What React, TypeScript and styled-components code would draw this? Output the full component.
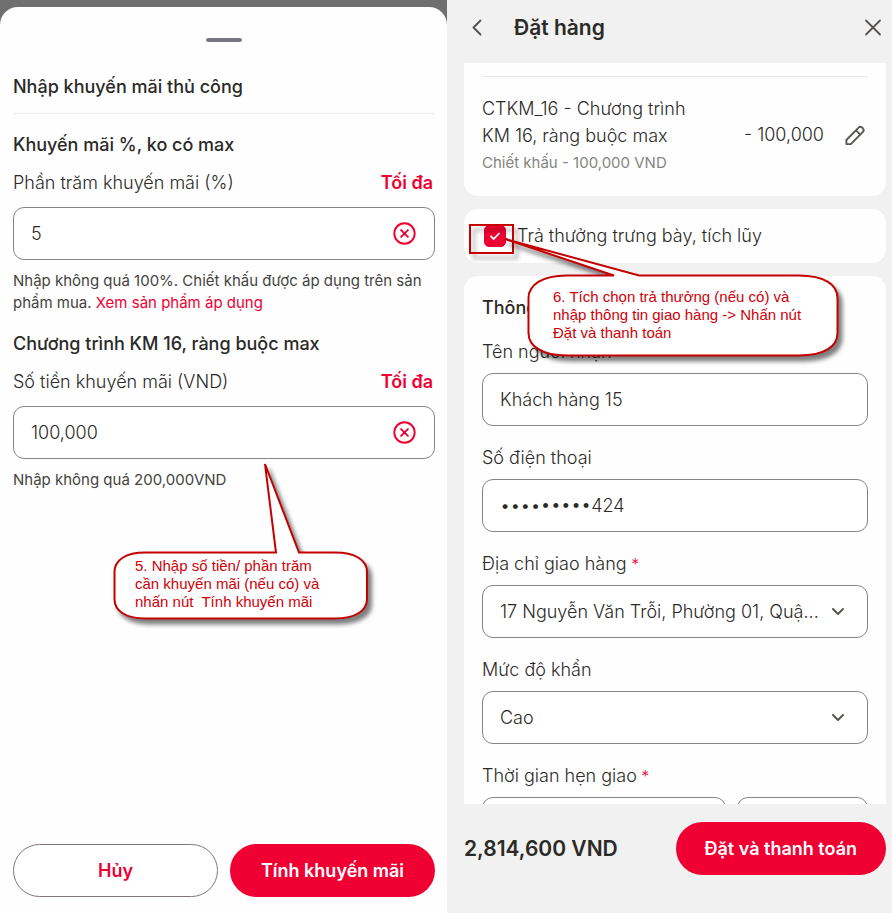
import React from 'react';
import styled, { createGlobalStyle } from 'styled-components';

const ink = '#2b2a27';
const brand = '#f00032';
const noteRed = '#c40000';

const GlobalStyle = createGlobalStyle`
  *, *::before, *::after { box-sizing: border-box; }
  body {
    margin: 0;
    background: #f1f1f1;
    color: ${ink};
    font-family: Inter, sans-serif;
    font-size: 18px;
    line-height: 24px;
  }
  button, input, select { font: inherit; color: inherit; }
  h1, h2, h3, p { margin: 0; }
`;

const Page = styled.div`
  display: grid;
  grid-template-columns: 447fr 445fr;
  height: 100vh;
`;

const Backdrop = styled.section`
  position: relative;
  display: flex;
  flex-direction: column;
  padding-top: 7px;
  background: #6f6f6f;
  min-width: 0;
`;

const Sheet = styled.div`
  flex: 1;
  display: flex;
  flex-direction: column;
  padding: 31px 12px 16px 13px;
  background: #fefefe;
  border-radius: 18px 18px 0 0;
`;

const Handle = styled.div`
  align-self: center;
  width: 36px;
  height: 4px;
  border-radius: 2px;
  background: #787580;
`;

const SheetTitle = styled.h1`
  margin-top: 33px;
  padding-bottom: 14px;
  border-bottom: 1px solid #ececec;
  font-size: 18px;
  font-weight: 500;
  line-height: 24px;
`;

const SheetBody = styled.div`
  flex: 1;
  display: flex;
  flex-direction: column;
  gap: 18px;
  padding-top: 19px;
`;

const Promo = styled.div`
  display: flex;
  flex-direction: column;
`;

const Heading = styled.h2`
  font-size: 18px;
  font-weight: 500;
  line-height: 24px;
`;

const LabelRow = styled.div`
  display: flex;
  justify-content: space-between;
  margin: 14px 0 12px;
  padding-right: 2px;
`;

const Label = styled.label`
  font-weight: 300;
`;

const TextButton = styled.button`
  padding: 0;
  border: 0;
  background: none;
  color: ${brand};
  font-weight: 600;
`;

const Box = styled.div<{ $menu?: boolean }>`
  display: flex;
  align-items: center;
  width: 100%;
  min-width: 0;
  height: 53px;
  padding: 0 ${p => (p.$menu ? 22 : 17)}px 0 17px;
  border: 1px solid #858585;
  border-radius: 11px;
  background: #fff;
`;

const BoxInput = styled.input`
  flex: 1;
  min-width: 0;
  padding: 0;
  border: 0;
  outline: 0;
  background: none;
  font-weight: 300;
`;

const BoxSelect = styled.select`
  flex: 1;
  min-width: 0;
  padding: 0;
  border: 0;
  outline: 0;
  appearance: none;
  background: none;
  font-weight: 300;
`;

const IconButton = styled.button`
  display: grid;
  place-items: center;
  padding: 0;
  border: 0;
  background: none;
`;

const Hint = styled.p`
  margin-top: 10px;
  font-size: 15px;
  font-weight: 400;
  line-height: 22px;
  color: #45443f;
`;

const HintLink = styled.a`
  color: ${brand};
  text-decoration: none;
`;

const SheetActions = styled.div`
  display: grid;
  grid-template-columns: 1fr 1fr;
  gap: 12px;
`;

const Pill = styled.button<{ $filled?: boolean }>`
  height: 53px;
  padding: 0 29px;
  border: ${p => (p.$filled ? '0' : '1px solid #857474')};
  border-radius: 27px;
  background: ${p => (p.$filled ? brand : '#fff')};
  color: ${p => (p.$filled ? '#fff' : brand)};
  font-weight: 600;
  white-space: nowrap;
`;

const Order = styled.section`
  position: relative;
  display: flex;
  flex-direction: column;
  min-width: 0;
  height: 100vh;
  background: #f1f1f1;
`;

const TopBar = styled.header`
  display: flex;
  align-items: center;
  height: 63px;
  padding: 0 10px 8px 20px;
  color: #55534f;
`;

const TopTitle = styled.h1`
  flex: 1;
  margin-left: 27px;
  color: ${ink};
  font-size: 21px;
  font-weight: 600;
  line-height: 28px;
`;

const Scroll = styled.div`
  flex: 1;
  min-height: 0;
  display: flex;
  flex-direction: column;
  gap: 13px;
  overflow: hidden;
  padding: 0 6px 0 17px;
`;

const Card = styled.div<{ $cutTop?: boolean }>`
  flex: none;
  padding: ${p => (p.$cutTop ? '13px' : '0')} 18px 0;
  border-radius: ${p => (p.$cutTop ? '0 0 14px 14px' : '14px')};
  background: #fefefe;
`;

const DiscountRow = styled.div`
  display: flex;
  align-items: center;
  padding: 18px 2px 22px 0;
  border-top: 1px solid #e8e8e8;
`;

const DiscountText = styled.div`
  flex: 1;
  min-width: 0;
`;

const DiscountName = styled.p`
  max-width: 220px;
  font-weight: 300;
  line-height: 27px;
`;

const DiscountNote = styled.p`
  margin-top: 3px;
  color: #85857f;
  font-size: 15px;
  line-height: 22px;
`;

const Amount = styled.span`
  margin-right: 20px;
  font-weight: 300;
`;

const RewardRow = styled.div`
  display: flex;
  align-items: center;
  gap: 11px;
  height: 54px;
`;

const CheckWrap = styled.span`
  display: grid;
  margin-left: 2px;
  color: #fff;

  > * { grid-area: 1 / 1; place-self: center; }
  > svg { pointer-events: none; }
`;

const Check = styled.input`
  appearance: none;
  width: 22px;
  height: 22px;
  margin: 0;
  border: 1px solid ${brand};
  border-radius: 5px;
  background: #fff;
  &:checked { background: ${brand}; }
`;

const Form = styled.div`
  display: flex;
  flex-direction: column;
  gap: 20px;
  padding: 20px 0;
`;

const Field = styled.div`
  display: flex;
  flex-direction: column;
  gap: 9px;
`;

const Required = styled.span`
  color: ${brand};
  font-size: 16px;
`;

const Times = styled.div`
  display: grid;
  grid-template-columns: 245fr 131fr;
  gap: 11px;
`;

const Footer = styled.footer`
  display: flex;
  align-items: flex-start;
  justify-content: space-between;
  height: 109px;
  padding: 18px 6px 0 17px;
`;

const Total = styled.strong`
  font-size: 21px;
  font-weight: 600;
  line-height: 53px;
`;

const Note = styled.aside<{ $left: number; $top: number; $width: number; $pad: string }>`
  position: absolute;
  z-index: 2;
  left: ${p => p.$left}px;
  top: ${p => p.$top}px;
  width: ${p => p.$width}px;
  padding: ${p => p.$pad};
  color: #d00008;
  font-family: "Liberation Sans", Arial, sans-serif;
  font-size: 15px;
  line-height: 18px;
  white-space: pre;
  pointer-events: none;
`;

const NoteShape = styled.svg`
  position: absolute;
  left: 0;
  top: 0;
  overflow: visible;
  filter: drop-shadow(4px 5px 2px rgba(0, 0, 0, 0.5));
`;

const NoteText = styled.p`
  position: relative;
`;

const Highlight = styled.div`
  position: absolute;
  z-index: 1;
  left: 22px;
  top: 224px;
  width: 45px;
  height: 30px;
  border: 2px solid ${noteRed};
  filter: drop-shadow(4px 5px 2px rgba(0, 0, 0, 0.35));
  pointer-events: none;
`;

const ClearIcon = () => (
  <svg width="24" height="24" viewBox="0 0 24 24" fill="none" stroke={brand} strokeWidth="1.9" strokeLinecap="round">
    <circle cx="11.500" cy="11.500" r="10.2" />
    <path d="M8.100 8.100l6.800 6.800M14.900 8.100l-6.800 6.800" />
  </svg>
);

const DownIcon = () => (
  <svg width="14" height="14" viewBox="0 0 14 14" fill="none" stroke="#55534f" strokeWidth="1.9" strokeLinecap="round" strokeLinejoin="round">
    <path d="M2 4l5 5 5-5" />
  </svg>
);

const PencilIcon = () => (
  <svg width="22" height="22" viewBox="0 0 22 22" fill="none" stroke="#55534f" strokeWidth="1.8" strokeLinejoin="round">
    <path d="M2.400 20.200V16L14.600 3.600c1.100-1.100 2.300-1.100 3.300-.2l1.100 1.100c1 1.100 1 2.300-.1 3.400L6.800 20.200z" />
    <path d="M12 6.400l4.200 4.200" />
  </svg>
);

type PromoProps = { id: string; title: string; label: string; value: string; children: React.ReactNode };

const PromoField = ({ id, title, label, value, children }: PromoProps) => (
  <Promo>
    <Heading>{title}</Heading>
    <LabelRow>
      <Label htmlFor={id}>{label}</Label>
      <TextButton type="button">Tối đa</TextButton>
    </LabelRow>
    <Box>
      <BoxInput id={id} defaultValue={value} />
      <IconButton type="button" aria-label="Xóa"><ClearIcon /></IconButton>
    </Box>
    <Hint>{children}</Hint>
  </Promo>
);

const SelectField = ({ id, label, value, required }: { id: string; label: string; value: string; required?: boolean }) => (
  <Field>
    <Label htmlFor={id}>{label}{required && <Required> *</Required>}</Label>
    <Box $menu>
      <BoxSelect id={id}><option>{value}</option></BoxSelect>
      <DownIcon />
    </Box>
  </Field>
);

export default function App() {
  return (
    <Page>
      <GlobalStyle />
      <Backdrop>
        <Sheet>
          <Handle />
          <SheetTitle>Nhập khuyến mãi thủ công</SheetTitle>
          <SheetBody>
            <PromoField id="percent" title="Khuyến mãi %, ko có max" label="Phần trăm khuyến mãi (%)" value="5">
              Nhập không quá 100%. Chiết khấu được áp dụng trên sản phẩm mua. <HintLink href="#products">Xem sản phẩm áp dụng</HintLink>
            </PromoField>
            <PromoField id="money" title="Chương trình KM 16, ràng buộc max" label="Số tiền khuyến mãi (VND)" value="100,000">
              Nhập không quá 200,000VND
            </PromoField>
          </SheetBody>
          <SheetActions>
            <Pill type="button">Hủy</Pill>
            <Pill type="button" $filled>Tính khuyến mãi</Pill>
          </SheetActions>
        </Sheet>
        <Note $left={113} $top={551} $width={256} $pad="6px 0 10px 22px">
          <NoteShape width="256" height="70">
            <path
              d="M32 1.5H163L152 -87L186 1.5H222C242 1.5 254 9 254 21V48C254 60 242 67.500 222 67.500H32C13 67.500 1.500 60 1.500 48V21C1.500 9 13 1.500 32 1.500Z"
              fill="#fff" stroke={noteRed} strokeWidth="2"
            />
          </NoteShape>
          <NoteText>{'5. Nhập số tiền/ phần trăm\ncần khuyến mãi (nếu có) và\nnhấn nút  Tính khuyến mãi'}</NoteText>
        </Note>
      </Backdrop>

      <Order>
        <TopBar>
          <IconButton type="button" aria-label="Quay lại">
            <svg width="20" height="20" viewBox="0 0 20 20" fill="none" stroke="currentColor" strokeWidth="1.9" strokeLinecap="round" strokeLinejoin="round">
              <path d="M13.500 2.500L6.500 9.500l7 7" />
            </svg>
          </IconButton>
          <TopTitle>Đặt hàng</TopTitle>
          <IconButton type="button" aria-label="Đóng">
            <svg width="18" height="18" viewBox="0 0 18 18" fill="none" stroke="currentColor" strokeWidth="1.8" strokeLinecap="round">
              <path d="M2 1.500l14 14M16 1.500L2 15.500" />
            </svg>
          </IconButton>
        </TopBar>

        <Scroll>
          <Card $cutTop>
            <DiscountRow>
              <DiscountText>
                <DiscountName>CTKM_16 - Chương trình KM 16, ràng buộc max</DiscountName>
                <DiscountNote>Chiết khấu - 100,000 VND</DiscountNote>
              </DiscountText>
              <Amount>- 100,000</Amount>
              <IconButton type="button" aria-label="Sửa"><PencilIcon /></IconButton>
            </DiscountRow>
          </Card>

          <Card>
            <RewardRow>
              <CheckWrap>
                <Check id="reward" type="checkbox" defaultChecked />
                <svg width="12" height="12" viewBox="0 0 12 12" fill="none" stroke="currentColor" strokeWidth="1.8" strokeLinecap="round" strokeLinejoin="round">
                  <path d="M2 6.300L4.700 9L10 3.500" />
                </svg>
              </CheckWrap>
              <Label htmlFor="reward">Trả thưởng trưng bày, tích lũy</Label>
            </RewardRow>
          </Card>

          <Card>
            <Form>
              <Heading>Thông tin giao hàng</Heading>
              <Field>
                <Label htmlFor="receiver">Tên người nhận</Label>
                <Box><BoxInput id="receiver" defaultValue="Khách hàng 15" /></Box>
              </Field>
              <Field>
                <Label htmlFor="phone">Số điện thoại</Label>
                <Box><BoxInput id="phone" defaultValue="•••••••••424" /></Box>
              </Field>
              <SelectField id="address" label="Địa chỉ giao hàng" value="17 Nguyễn Văn Trỗi, Phường 01, Quậ..." required />
              <SelectField id="priority" label="Mức độ khẩn" value="Cao" />
              <Field>
                <Label htmlFor="date">Thời gian hẹn giao<Required> *</Required></Label>
                <Times>
                  <Box><BoxInput id="date" /></Box>
                  <Box><BoxInput aria-label="Giờ" /></Box>
                </Times>
              </Field>
            </Form>
          </Card>
        </Scroll>

        <Footer>
          <Total>2,814,600 VND</Total>
          <Pill type="button" $filled>Đặt và thanh toán</Pill>
        </Footer>

        <Highlight />
        <Note $left={80} $top={274} $width={312} $pad="14px 0 14px 26px">
          <NoteShape width="312" height="84">
            <path
              d="M40 1.500H87L-22 -35L112 1.500H272C298 1.500 310.500 11 310.500 24V59C310.500 72 298 81.500 272 81.500H40C15 81.500 1.500 72 1.500 59V24C1.500 11 15 1.500 40 1.500Z"
              fill="#fff" stroke={noteRed} strokeWidth="2"
            />
          </NoteShape>
          <NoteText>{'6. Tích chọn trả thưởng (nếu có) và\nnhập thông tin giao hàng -> Nhấn nút\nĐặt và thanh toán'}</NoteText>
        </Note>
      </Order>
    </Page>
  );
}
